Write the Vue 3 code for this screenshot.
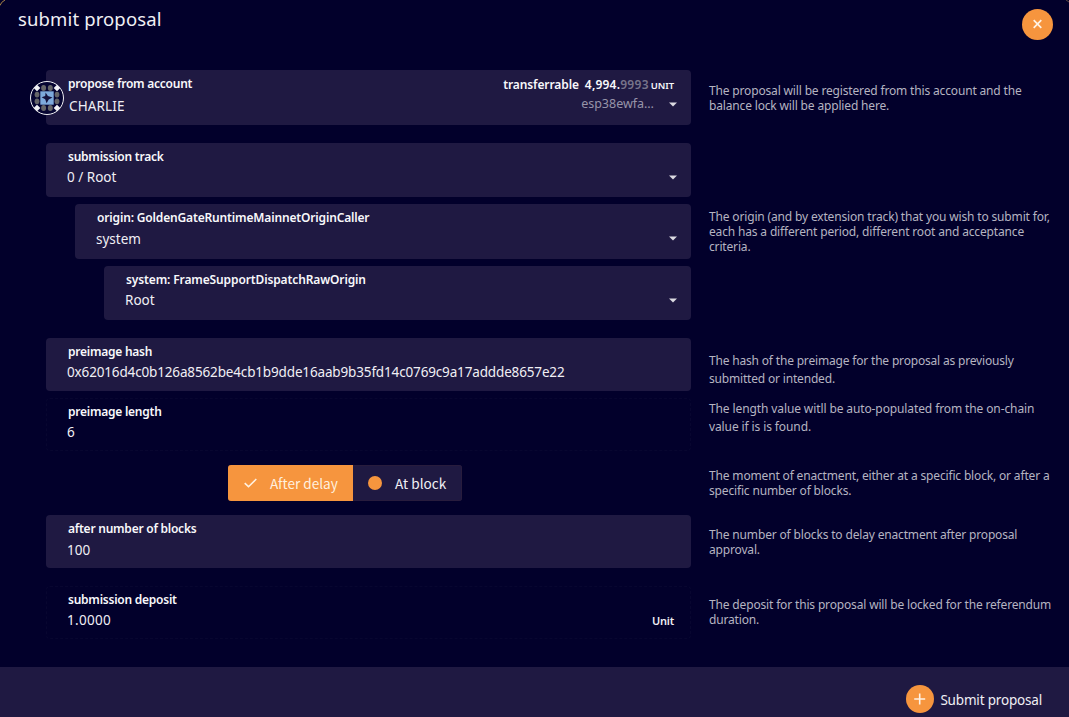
<script setup>
const rows = [
  {
    key: 'account', gap: 18, help: ['The proposal will be registered from this account and the', 'balance lock will be applied here.'], top: 13,
    fields: [{ label: 'propose from account', value: 'CHARLIE', id: 'f-account', h: 55, drop: true }],
  },
  {
    key: 'track', gap: 18, help: ['The origin (and by extension track) that you wish to submit for,', 'each has a different period, different root and acceptance', 'criteria.'], top: 66,
    fields: [
      { label: 'submission track', value: '0 / Root', id: 'f-track', h: 54, drop: true },
      { label: 'origin: GoldenGateRuntimeMainnetOriginCaller', value: 'system', id: 'f-origin', h: 55, drop: true },
      { label: 'system: FrameSupportDispatchRawOrigin', value: 'Root', id: 'f-system', h: 54, drop: true },
    ],
  },
  {
    key: 'hash', gap: 7, help: ['The hash of the preimage for the proposal as previously', 'submitted or intended.'], top: 14, loose: true,
    fields: [{ label: 'preimage hash', value: '0x62016d4c0b126a8562be4cb1b9dde16aab9b35fd14c0769c9a17addde8657e22', id: 'f-hash', h: 53 }],
  },
  {
    key: 'length', gap: 13, help: ['The length value witll be auto-populated from the on-chain', 'value if is is found.'], top: 2, loose: true,
    fields: [{ label: 'preimage length', value: '6', id: 'f-length', h: 53, plain: true }],
  },
  { key: 'enactment', gap: 14, help: ['The moment of enactment, either at a specific block, or after a', 'specific number of blocks.'], top: 4, fields: [] },
  {
    key: 'blocks', gap: 18, help: ['The number of blocks to delay enactment after proposal', 'approval.'], top: 12,
    fields: [{ label: 'after number of blocks', value: '100', id: 'f-blocks', h: 53 }],
  },
  {
    key: 'deposit', gap: 0, help: ['The deposit for this proposal will be locked for the referendum', 'duration.'], top: 11,
    fields: [{ label: 'submission deposit', value: '1.0000', id: 'f-deposit', h: 53, plain: true }],
  },
]
</script>

<template>
  <div class="modal">
    <svg class="corner" width="6" height="6"><path d="M0 5.5Q1 2 5 0" fill="none" stroke="#a88348" /></svg>
    <svg class="corner right" width="3" height="3"><path d="M0 0L3 2" fill="none" stroke="#5c4a45" /></svg>
    <header>
      <h1>submit proposal</h1>
      <button class="close" aria-label="close">
        <svg width="31" height="31" viewBox="0 0 31 31"><path d="M11.7 11.2l7.6 7.6M19.3 11.2l-7.6 7.6" stroke="#fff2e4" stroke-width="1.7" /></svg>
      </button>
    </header>
    <main>
      <section v-for="r in rows" :key="r.key" class="row" :style="{ marginBottom: r.gap + 'px' }">
        <div class="fields">
          <div v-for="f in r.fields" :key="f.id" class="field" :class="[f.id, { plain: f.plain }]" :style="{ height: f.h + 'px' }">
            <div class="label"><span>{{ f.label }}</span></div>
            <div class="value"><span>{{ f.value }}</span></div>
            <template v-if="f.id === 'f-account'">
              <svg class="identicon" width="34" height="34" viewBox="0 0 34 34">
                <circle cx="17" cy="17" r="16.5" fill="#060532" stroke="#eeeef2" stroke-width="1" />
                <g fill="#656568">
                  <ellipse v-for="x in [13.6, 20.3]" :key="'t' + x" :cx="x" cy="7" rx="2.5" ry="3" />
                  <ellipse v-for="x in [13.6, 20.3]" :key="'b' + x" :cx="x" cy="27" rx="2.5" ry="3" />
                  <ellipse v-for="y in [13.6, 20.3]" :key="'l' + y" cx="7" :cy="y" rx="2.4" ry="2.9" />
                  <ellipse v-for="y in [13.6, 20.3]" :key="'r' + y" cx="27" :cy="y" rx="2.4" ry="2.9" />
                </g>
                <path fill="#f1f1f5" d="M7 3.7L10.3 7 7 10.3 3.7 7zM27 3.7L30.3 7 27 10.3 23.7 7zM7 23.7L10.3 27 7 30.3 3.7 27zM27 23.7L30.3 27 27 30.3 23.7 27z" />
                <path fill="#7eaadc" d="M10.3 10.3h13.4v13.4H10.3z" />
                <path fill="#15133e" d="M15.6 11.5l2.3 3.4 4.6 1.6-3.8 1.9-2.1 3.8-1.4-4-3.6-2 3.6-1.2z" />
              </svg>
              <div class="balance"><span class="transfer">transferrable</span><b>4,994.</b><span class="frac">9993</span><span class="token">UNIT</span></div>
              <span class="address">esp38ewfa…</span>
            </template>
            <svg v-if="f.drop" class="caret" width="8" height="5" viewBox="0 0 8 5"><path d="M0 .4h8L4 4.6z" fill="#dcdbe2" /></svg>
            <b v-if="f.id === 'f-deposit'" class="unit">Unit</b>
          </div>
          <div v-if="r.key === 'enactment'" class="toggle">
            <button class="on">
              <svg width="13" height="10" viewBox="0 0 13 10"><path d="M.7 5.2l3.8 3.5L12.3 1" fill="none" stroke="#fff0df" stroke-width="1.6" /></svg>
              <span>After delay</span>
            </button>
            <button class="off"><i></i><span>At block</span></button>
          </div>
        </div>
        <p class="help" :class="['help-' + r.key, { loose: r.loose }]" :style="{ paddingTop: r.top + 'px' }">
          <span v-for="line in r.help" :key="line">{{ line }}</span>
        </p>
      </section>
    </main>
    <footer>
      <button class="submit">
        <svg width="28" height="28" viewBox="0 0 28 28"><circle cx="14" cy="14" r="14" fill="#f6953e" /><path d="M8.2 14h11M13.7 8.5v11" stroke="#fff2e4" stroke-width="1.6" /></svg>
        <span>Submit proposal</span>
      </button>
    </footer>
  </div>
</template>

<style>
body { margin: 0; background: #02002b; }
</style>
<style scoped>
.modal { position: relative; width: 1069px; height: 717px; display: flex; flex-direction: column; overflow: hidden; background: #02002b; color: #f0eff4; font-family: "Noto Sans", sans-serif; }
.corner { position: absolute; left: 0; top: 0; }
.corner.right { left: auto; right: 0; }
header { height: 70px; flex: none; box-sizing: border-box; display: flex; justify-content: space-between; padding: 8px 16px 0 18px; }
h1 { margin: -1px 0 0; font-size: 18.5px; line-height: 24px; font-weight: 400; letter-spacing: .13px; }
button { border: 0; padding: 0; background: none; color: inherit; font: inherit; }
.close { width: 31px; height: 31px; border-radius: 50%; background: #f6953e; margin-top: 1px; }
.close svg { display: block; }
main { flex: 1; }
.row { display: flex; }
.fields { width: 645px; margin-left: 46px; display: flex; flex-direction: column; gap: 7px; }
.field { position: relative; box-sizing: border-box; border-radius: 4px; background: #1f1942; padding: 6px 0 0 22px; }
.f-origin { margin-left: 29px; }
.f-system { margin-left: 58px; }
.plain { background: transparent; border: 1px dashed #080630; padding: 5px 0 0 21px; }
.label { font-size: 12px; line-height: 16px; font-weight: 600; white-space: nowrap; letter-spacing: -.24px; color: #f8f8fb; }
.f-origin .label { letter-spacing: -.155px; }
.f-system .label { letter-spacing: -.125px; }
.value { font-size: 13.5px; line-height: 20px; margin-top: 2px; margin-left: -1px; white-space: nowrap; }
.f-account .value { margin-top: 4px; margin-left: 1px; letter-spacing: .12px; }
.f-origin .value, .f-blocks .value { margin-top: 3px; }
.f-hash .value { letter-spacing: -.15px; }
.f-deposit .value { letter-spacing: .3px; }
.identicon { position: absolute; left: -16px; top: 11px; }
.balance { position: absolute; right: 17px; top: 6px; font-size: 12px; line-height: 17px; font-weight: 600; display: flex; align-items: baseline; color: #f8f8fb; }
.balance b { font-weight: 600; letter-spacing: .2px; }
.transfer { margin-right: 6px; letter-spacing: -.1px; }
.frac { color: #77748a; font-weight: 600; letter-spacing: .3px; }
.token { font-size: 9.5px; margin-left: 2px; letter-spacing: -.1px; }
.address { position: absolute; right: 37px; top: 25px; font-size: 12.5px; line-height: 18px; color: #9794a9; }
.caret { position: absolute; right: 14px; top: 32px; }
.unit { position: absolute; right: 16px; top: 26px; font-size: 11px; line-height: 16px; font-weight: 600; letter-spacing: -.2px; }
.toggle { display: flex; width: 234px; height: 36px; margin: 1px 0 0 182px; border-radius: 3px; overflow: hidden; background: #1f1942; font: 13.6px "Noto Sans CJK JP", sans-serif; box-shadow: inset 0 0 0 1px #281c3d; }
.toggle button { display: flex; align-items: center; }
.toggle span { position: relative; top: .4px; }
.on { width: 125px; background: #f6953e; color: #fff0df; }
.on svg { margin: 0 13px 0 16px; }
.off i { width: 14px; height: 14px; border-radius: 50%; background: #f6953e; margin: 0 13px 0 15px; }
.help { margin: 0 0 0 18px; width: 350px; height: 0; font-size: 12px; line-height: 15.2px; letter-spacing: -.16px; color: #b5b4c1; white-space: nowrap; }
.help span { display: block; width: max-content; }
.help-length { letter-spacing: -.11px; }
.help-hash { letter-spacing: -.18px; }
.loose { line-height: 18px; }
footer { height: 50px; flex: none; background: #1f1942; display: flex; justify-content: flex-end; }
.submit { display: flex; height: 28px; align-items: center; margin: 18px 27px 0 0; gap: 6px; font-size: 13.5px; letter-spacing: -.18px; }
.submit span { position: relative; top: 1px; }
</style>
